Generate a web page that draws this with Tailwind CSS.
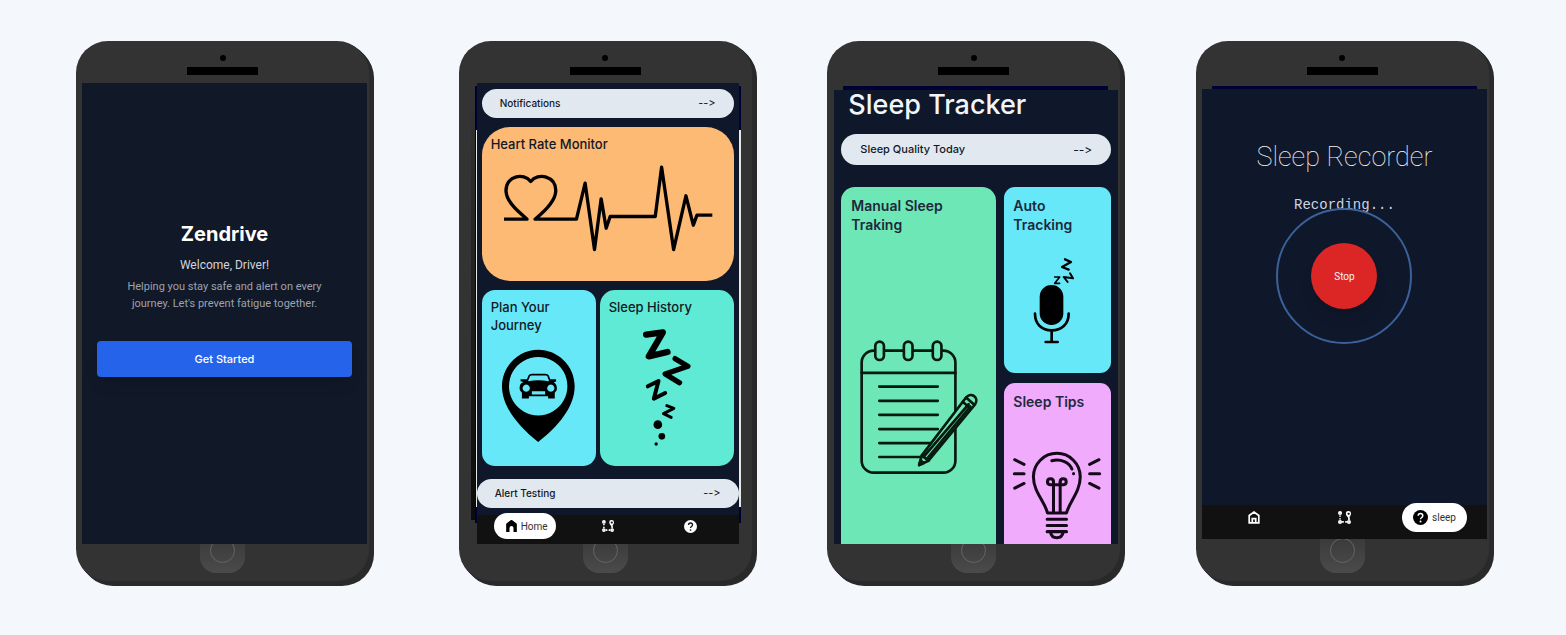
<!DOCTYPE html>
<html lang="en">
<head>
<meta charset="utf-8">
<meta name="viewport" content="width=device-width, initial-scale=1">
<title>Zendrive</title>
<script src="https://cdn.jsdelivr.net/npm/@tailwindcss/browser@4"></script>
</head>
<body class="min-h-screen bg-[#f4f7fc] font-['Inter','Liberation_Sans',sans-serif] [font-variant-ligatures:none] [font-feature-settings:'calt'_0]">
<svg class="hidden" aria-hidden="true">
  <symbol id="route" viewBox="0 0 38 38">
    <g fill="none" stroke="#fff" stroke-width="5">
      <circle cx="6" cy="6" r="3.500"/><circle cx="6" cy="32" r="3.500"/><circle cx="32" cy="32" r="3.500"/>
      <path d="M6 13V17M6 21V25M12 32H17M21 32H26M32 18V26"/>
    </g>
    <path fill="#fff" fill-rule="evenodd" d="M31 0a7.500 7.500 0 0 1 7 8c0 5-5 10-7 13c-3-3-8-8-8-13a7.500 7.500 0 0 1 8-8zM31 5a3 3 0 1 0 .1 0z"/>
  </symbol>
</svg>
<main class="flex justify-between pt-[41px] pr-[77px] pb-12 pl-[76px]">

  <!-- Welcome -->
  <section class="mr-[14px] flex h-[540px] w-[293px] shrink-0 flex-col rounded-[32px] bg-[#333] shadow-[1px_1px_#2a2a2a,2px_2px_#2a2a2a,3px_3px_#2a2a2a,4px_4px_#2a2a2a,5px_5px_#2a2a2a]">
    <div class="flex h-[42px] flex-col items-center gap-[6px] pt-[14px]">
      <span class="size-[6px] rounded-full bg-black"></span><span class="h-2 w-[71px] bg-black"></span>
    </div>
    <div class="mr-[2px] ml-[6px] flex h-[461px] flex-col items-center justify-center bg-[#111827] px-[15px] pb-[31px] text-center">
      <h1 class="text-[20px] leading-[30px] font-bold text-white">Zendrive</h1>
      <p class="mt-2 font-['Roboto',sans-serif] text-[12px] leading-4 text-[#d1d5db]">Welcome, Driver!</p>
      <p class="mt-[5px] w-[216px] font-['Roboto',sans-serif] text-[11px] leading-[17px] text-[#9ca3af]">Helping you stay safe and alert on every journey. Let's prevent fatigue together.</p>
      <button class="mt-[29px] h-9 w-full rounded bg-[#2563eb] text-[11px] font-medium text-white shadow-lg">Get Started</button>
    </div>
    <div class="flex flex-1 justify-center">
      <div class="flex h-[29px] w-[45px] justify-center overflow-hidden rounded-b-[16px] bg-linear-to-b from-[#3d3d3d] to-[#4b4b4b]"><span class="-mt-[6px] size-[25px] rounded-full border border-[#656565]"></span></div>
    </div>
  </section>

  <!-- Dashboard -->
  <section class="flex h-[540px] w-[293px] shrink-0 flex-col rounded-[32px] bg-[#333] shadow-[1px_1px_#2a2a2a,2px_2px_#2a2a2a,3px_3px_#2a2a2a,4px_4px_#2a2a2a,5px_5px_#2a2a2a]">
    <div class="flex h-[42px] flex-col items-center gap-[6px] pt-[14px]">
      <span class="size-[6px] rounded-full bg-black"></span><span class="h-2 w-[71px] bg-black"></span>
    </div>
    <div class="relative mr-[13px] ml-[18px] flex h-[461px] flex-col">
      <span class="absolute top-[18px] -left-[6px] h-[419px] w-[5px] bg-linear-to-b from-[#333] to-[#0c0c0c]"></span>
      <span class="absolute top-[3px] -right-[2px] -left-[2px] h-[437px] bg-[#000033]"></span>
      <span class="absolute top-[47px] -right-[2px] -left-[1px] h-[377px] bg-[#e8e8e4]"></span>
      <div class="relative flex flex-1 flex-col bg-[#0f172a]">
        <div class="px-[5px] pt-[6px] text-[#111827]">
          <a href="#notifications" class="flex h-[29px] items-center justify-between rounded-full bg-[#e2e8f0] px-[18px] text-[10px] font-medium"><span>Notifications</span><span class="text-[11px] font-normal">--&gt;</span></a>
          <a href="#heart" class="mt-[9px] flex h-[154px] flex-col items-start rounded-[28px] bg-[#fdba74] pt-[8px] pl-[9px] text-[13px] leading-[18px] font-medium">
            <h2>Heart Rate Monitor</h2>
            <svg class="mt-[9px] ml-[9px] h-[92px] w-[217px]" viewBox="150 395 650 275" fill="none" stroke="#000" stroke-width="10"><path stroke-linejoin="round" d="M162 566H231C211 548 169 516 168 482C167 436 221 425 242 453C263 425 319 436 317 482C316 510 292 536 255 566H379L405 458L433 657L453 505L468 593L480 558H615L634 410L670 657L707 496L729 584L740 554H786"/></svg>
          </a>
          <div class="mt-[9px] flex gap-[4px] text-[13px] leading-[18px] font-medium">
            <a href="#journey" class="flex h-[176px] w-[114px] flex-col rounded-[13px] bg-[#67e8f9] pt-[8px] pl-[9px]">
              <h2>Plan Your<br>Journey</h2>
              <svg class="mt-[13px] ml-[9px] h-[97px] w-[77px]" viewBox="150 200 232 292"><path fill-rule="evenodd" d="M265 208C325 208 375 257 375 318C375 380 325 440 265 486C207 440 156 380 156 318C156 257 206 208 265 208ZM265 230A88 88 0 1 0 265.100 230Z"/>
                <path d="M231 304L238 287Q240 283 246 283H287Q293 283 295 287L301 304" fill="none" stroke="#000" stroke-width="5"/><path fill-rule="evenodd" d="M212 297H230L236 303Q265 297 296 303L302 297H319V304L312 306C319 310 323 318 321 330L315 338V355H295V348H237V355H216V338L210 330C207 316 212 308 221 305L212 303ZM229 313A11 11 0 1 0 229.100 313ZM303 313A11 11 0 1 0 303.100 313ZM246 333V343H286V333Z"/></svg>
            </a>
            <a href="#history" class="flex h-[176px] flex-1 flex-col rounded-[15px] bg-[#5eead4] pt-[8px] pl-[9px]">
              <h2>Sleep History</h2>
              <svg class="mt-[11px] ml-[32px] h-[120px] w-[52px]" viewBox="575 140 155 360" fill="none" stroke="#000" stroke-linecap="round" stroke-linejoin="round"><path stroke-width="19" d="M590 163L640 156L598 228L654 215"/><path stroke-width="16" d="M677 235L715 258L647 281L690 307"/><path stroke-width="12" d="M595 318L627 302L613 355L647 338"/><path stroke-width="9" d="M652 376L673 384L642 400L665 411"/><g fill="#000" stroke="none"><circle cx="625" cy="433" r="13"/><circle cx="637" cy="468" r="10"/><circle cx="620" cy="491" r="5"/></g></svg>
            </a>
          </div>
        </div>
        <a href="#alert" class="mt-[13px] flex h-[29px] items-center justify-between rounded-full bg-[#e2e8f0] px-[18px] text-[10px] font-medium text-[#111827]"><span>Alert Testing</span><span class="text-[11px] font-normal">--&gt;</span></a>
        <nav class="mt-auto flex h-[29px] items-center bg-[#111] pb-[7px]">
          <a href="#home" class="ml-[17px] flex h-[26px] w-[62px] shrink-0 items-center justify-center gap-1 rounded-full bg-white pl-1 font-['Roboto',sans-serif] text-[10px] text-[#333]"><svg class="h-3 w-[11px]" viewBox="173 180 32 36"><path d="M189 179L205 191V216H195V204Q195 198 189 198Q183 198 183 204V216H173V191Z"/></svg>Home</a>
          <a href="#route" aria-label="Route" class="ml-[46px]"><svg class="size-3"><use href="#route"/></svg></a>
          <a href="#help" aria-label="Help" class="ml-[70px]"><svg class="size-[13px]" viewBox="0 0 26 26"><circle cx="13" cy="13" r="13" fill="#fff"/><path d="M9 10Q9 6 13 6T17 10C17 13 13 13 13 16" fill="none" stroke="#111" stroke-width="2.600"/><circle cx="13" cy="20" r="1.700" fill="#111"/></svg></a>
        </nav>
      </div>
    </div>
    <div class="flex flex-1 justify-center">
      <div class="flex h-[29px] w-[45px] justify-center overflow-hidden rounded-b-[16px] bg-linear-to-b from-[#3d3d3d] to-[#4b4b4b]"><span class="-mt-[6px] size-[25px] rounded-full border border-[#656565]"></span></div>
    </div>
  </section>

  <!-- Sleep tracker -->
  <section class="flex h-[540px] w-[293px] shrink-0 flex-col rounded-[32px] bg-[#333] shadow-[1px_1px_#2a2a2a,2px_2px_#2a2a2a,3px_3px_#2a2a2a,4px_4px_#2a2a2a,5px_5px_#2a2a2a]">
    <div class="flex h-[45px] flex-col items-center gap-[6px] pt-[14px]">
      <span class="size-[6px] rounded-full bg-black"></span><span class="h-2 w-[71px] bg-black"></span>
    </div>
    <div class="mr-[12px] ml-[16px] h-1 bg-[#000033]"></div>
    <div class="mr-[2px] ml-[7px] flex h-[454px] flex-col bg-[#0f172a] px-[7px] text-[#1e293b]">
      <h1 class="pl-[7px] text-[27px] leading-[30px] font-medium text-[#f1f5f9]">Sleep Tracker</h1>
      <a href="#quality" class="mt-[14px] flex h-[31px] shrink-0 items-center justify-between rounded-full bg-[#e2e8f0] px-[19px] text-[11px] font-medium text-[#111827]"><span>Sleep Quality Today</span><span class="text-[12px] font-normal">--&gt;</span></a>
      <div class="mt-[22px] flex flex-1 gap-2 text-[14px] leading-[19px] font-semibold">
        <a href="#manual" class="flex flex-1 flex-col rounded-t-[14px] bg-[#6ee7b7] pt-[9px] pl-[10px]">
          <h2>Manual Sleep<br>Traking</h2>
          <svg class="mt-[105px] ml-[6px] h-[138px] w-[123px]" viewBox="110 295 370 415" fill="none" stroke="#061a10" stroke-width="8" stroke-linecap="round" stroke-linejoin="round"><rect x="124" y="330" width="282" height="367" rx="36"/><path d="M124 397H406M177 438H353M177 481H353M177 523H353M177 566H353M177 608H335M177 650H300"/><g fill="#6ee7b7"><rect x="165" y="303" width="26" height="55" rx="13"/><rect x="251" y="303" width="26" height="55" rx="13"/><rect x="338" y="303" width="26" height="55" rx="13"/><path d="M297 674L305 645L438 471C453 453 479 471 465 492L325 661Z"/></g><path d="M305 645L325 661M311 649L446 491M321 655L451 498M428 484L452 505M438 471L462 492"/><path fill="#061a10" d="M297 674L301 660L311 668Z"/></svg>
        </a>
        <div class="flex w-[107px] flex-col gap-[10px]">
          <a href="#auto" class="flex h-[186px] shrink-0 flex-col rounded-[11px] bg-[#67e8f9] pt-[9px] pl-[9px]">
            <h2>Auto<br>Tracking</h2>
            <svg class="mt-[22px] ml-[19px] h-[90px] w-[45px]" viewBox="635 45 135 270" fill="none" stroke="#000" stroke-width="8" stroke-linecap="round" stroke-linejoin="round"><rect x="658" y="132" width="71" height="120" rx="35" fill="#000" stroke="none"/><path d="M644 218C644 250 665 268 694 268S745 250 745 218M694 268V303M676 303H712"/><path d="M734 55L752 63L725 78L745 86" stroke-width="7"/><path d="M703 108H718L703 127H718" stroke-width="5"/><path d="M742 123L730 108L758 112L749 97" stroke-width="6"/></svg>
          </a>
          <a href="#tips" class="flex flex-1 flex-col rounded-t-[11px] bg-[#f0abfc] pt-[9px] pl-[9px]">
            <h2>Sleep Tips</h2>
            <svg class="mt-[39px] -ml-[2px] h-[92px] w-[92px]" viewBox="575 90 275 275" fill="none" stroke="#150818" stroke-width="9" stroke-linecap="round" stroke-linejoin="round"><path d="M684 278C676 244 642 215 642 170A70 70 0 0 1 782 170C782 215 750 244 741 278ZM697 122C725 115 750 128 757 147M762 160V161M702 185V278M722 185V278M683 297H741M683 316H741M683 334H741M693 336C697 358 727 358 731 336M586 119L614 133M585 161H614M586 204L614 190M810 133L838 119M810 161H840M810 190L838 204"/><path d="M702 194H692A9 9 0 1 1 702 185M722 194H732A9 9 0 1 0 722 185M702 194H722"/></svg>
          </a>
        </div>
      </div>
    </div>
    <div class="flex flex-1 justify-center">
      <div class="flex h-[29px] w-[45px] justify-center overflow-hidden rounded-b-[16px] bg-linear-to-b from-[#3d3d3d] to-[#4b4b4b]"><span class="-mt-[6px] size-[25px] rounded-full border border-[#656565]"></span></div>
    </div>
  </section>

  <!-- Sleep recorder -->
  <section class="flex h-[540px] w-[293px] shrink-0 flex-col rounded-[32px] bg-[#333] shadow-[1px_1px_#2a2a2a,2px_2px_#2a2a2a,3px_3px_#2a2a2a,4px_4px_#2a2a2a,5px_5px_#2a2a2a]">
    <div class="flex h-[45px] flex-col items-center gap-[6px] pt-[14px]">
      <span class="size-[6px] rounded-full bg-black"></span><span class="h-2 w-[71px] bg-black"></span>
    </div>
    <div class="mr-[12px] ml-[16px] h-[3px] bg-[#000033]"></div>
    <div class="mr-[2px] ml-[6px] flex h-[450px] flex-col items-center bg-[#0f172a]">
      <h1 class="mt-[49px] font-['Roboto',sans-serif] text-[27px] leading-[38px] font-thin text-[#f1f5f9]">Sleep Recorder</h1>
      <p class="mt-[20px] font-['Liberation_Mono',monospace] text-[14px] leading-[18px] text-[#cbd5e1]">Recording...</p>
      <div class="-mt-[6px] flex size-[136px] items-center justify-center rounded-full border-2 border-[#3b6199]"><button class="size-[66px] rounded-full bg-[#dc2626] font-['Roboto',sans-serif] text-[10px] text-[#f1f5f9] shadow-lg">Stop</button></div>
      <nav class="mt-auto flex h-[34px] w-full items-center bg-[#111] pb-[9px]">
        <a href="#home" aria-label="Home" class="ml-[46px]"><svg class="h-[13px] w-[12px]" viewBox="0 0 34 38" fill="none" stroke="#fff" stroke-width="5"><path d="M3 13L17 3L31 13V35H3ZM12 35V22H22V35"/></svg></a>
        <a href="#route" aria-label="Route" class="ml-[78px]"><svg class="size-[13px]"><use href="#route"/></svg></a>
        <a href="#sleep" class="ml-[51px] flex h-[29px] w-[65px] shrink-0 items-center justify-center gap-1 rounded-full bg-white font-['Roboto',sans-serif] text-[10px] text-[#333]"><svg class="size-[15px]" viewBox="0 0 26 26"><circle cx="13" cy="13" r="13"/><path d="M9 10Q9 6 13 6T17 10C17 13 13 13 13 16" fill="none" stroke="#fff" stroke-width="2.600"/><circle cx="13" cy="20" r="1.700" fill="#fff"/></svg>sleep</a>
      </nav>
    </div>
    <div class="flex flex-1 justify-center">
      <div class="flex h-[34px] w-[45px] justify-center overflow-hidden rounded-b-[16px] bg-linear-to-b from-[#3b3b3b] to-[#4b4b4b]"><span class="-mt-[1px] size-[25px] rounded-full border border-[#656565]"></span></div>
    </div>
  </section>
</main>
</body>
</html>
